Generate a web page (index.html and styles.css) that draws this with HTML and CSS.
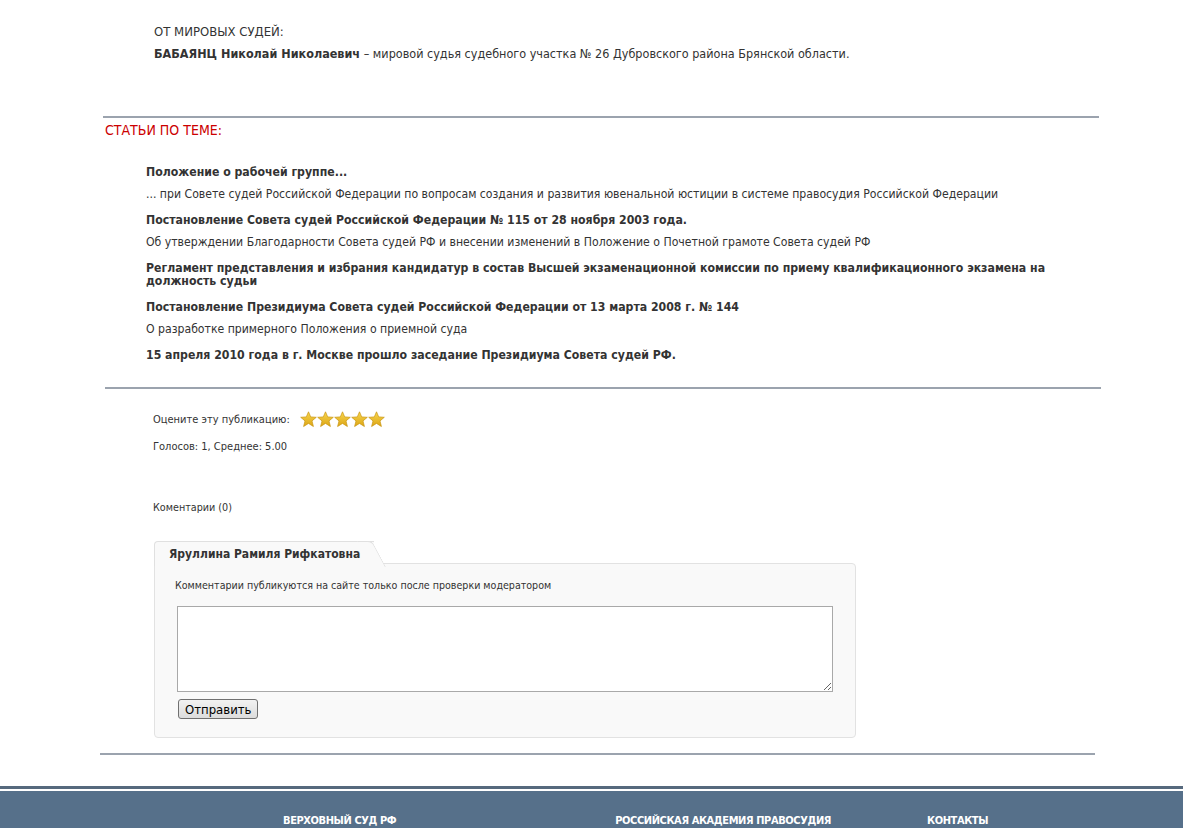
FILE: index.html
```html
<!DOCTYPE html>
<html lang="ru">
<head>
<meta charset="utf-8">
<title>Статья</title>
<link rel="stylesheet" href="styles.css">
</head>
<body>
<div class="page">
  <div class="content">
    <div class="judges">
      <p class="judges-head">ОТ МИРОВЫХ СУДЕЙ:</p>
      <p class="judges-line"><b>БАБАЯНЦ Николай Николаевич</b> – мировой судья судебного участка № 26 Дубровского района Брянской области.</p>
    </div>
    <hr class="rule rule-top">
    <h2 class="related-title">СТАТЬИ ПО ТЕМЕ:</h2>
    <ul class="related">
      <li>
        <a class="rel-title">Положение о рабочей группе...</a>
        <p class="rel-desc">... при Совете судей Российской Федерации по вопросам создания и развития ювенальной юстиции в системе правосудия Российской Федерации</p>
      </li>
      <li>
        <a class="rel-title">Постановление Совета судей Российской Федерации № 115 от 28 ноября 2003 года.</a>
        <p class="rel-desc">Об утверждении Благодарности Совета судей РФ и внесении изменений в Положение о Почетной грамоте Совета судей РФ</p>
      </li>
      <li>
        <a class="rel-title">Регламент представления и избрания кандидатур в состав Высшей экзаменационной комиссии по приему квалификационного экзамена на должность судьи</a>
      </li>
      <li>
        <a class="rel-title">Постановление Президиума Совета судей Российской Федерации от 13 марта 2008 г. № 144</a>
        <p class="rel-desc">О разработке примерного Положения о приемной суда</p>
      </li>
      <li>
        <a class="rel-title">15 апреля 2010 года в г. Москве прошло заседание Президиума Совета судей РФ.</a>
      </li>
    </ul>
    <hr class="rule rule-mid">
    <div class="rating">
      <div class="rate-row">
        <span>Оцените эту публикацию:</span>
        <span class="stars">
          <svg viewBox="0 0 17 17" class="star"><defs><linearGradient id="sg" x1="0" y1="0" x2="0" y2="1"><stop offset="0" stop-color="#f8d64e"/><stop offset="1" stop-color="#dca515"/></linearGradient></defs><path d="M8.5 0.8 L10.7 5.9 L16.3 6.3 L12 9.9 L13.4 15.5 L8.5 12.4 L3.6 15.5 L5 9.9 L0.7 6.3 L6.3 5.9 Z" fill="url(#sg)" stroke="#c99510" stroke-width="0.7" stroke-linejoin="round"/></svg>
          <svg viewBox="0 0 17 17" class="star"><path d="M8.5 0.8 L10.7 5.9 L16.3 6.3 L12 9.9 L13.4 15.5 L8.5 12.4 L3.6 15.5 L5 9.9 L0.7 6.3 L6.3 5.9 Z" fill="url(#sg)" stroke="#c99510" stroke-width="0.7" stroke-linejoin="round"/></svg>
          <svg viewBox="0 0 17 17" class="star"><path d="M8.5 0.8 L10.7 5.9 L16.3 6.3 L12 9.9 L13.4 15.5 L8.5 12.4 L3.6 15.5 L5 9.9 L0.7 6.3 L6.3 5.9 Z" fill="url(#sg)" stroke="#c99510" stroke-width="0.7" stroke-linejoin="round"/></svg>
          <svg viewBox="0 0 17 17" class="star"><path d="M8.5 0.8 L10.7 5.9 L16.3 6.3 L12 9.9 L13.4 15.5 L8.5 12.4 L3.6 15.5 L5 9.9 L0.7 6.3 L6.3 5.9 Z" fill="url(#sg)" stroke="#c99510" stroke-width="0.7" stroke-linejoin="round"/></svg>
          <svg viewBox="0 0 17 17" class="star"><path d="M8.5 0.8 L10.7 5.9 L16.3 6.3 L12 9.9 L13.4 15.5 L8.5 12.4 L3.6 15.5 L5 9.9 L0.7 6.3 L6.3 5.9 Z" fill="url(#sg)" stroke="#c99510" stroke-width="0.7" stroke-linejoin="round"/></svg>
        </span>
      </div>
      <p class="votes">Голосов: 1, Среднее: 5.00</p>
    </div>
    <p class="comments-count">Коментарии (0)</p>
    <div class="comment-form">
      <div class="tab">Яруллина Рамиля Рифкатовна</div>
      <div class="panel">
        <p class="note">Комментарии публикуются на сайте только после проверки модератором</p>
        <textarea class="area"></textarea>
        <button class="send" type="button">Отправить</button>
      </div>
    </div>
    <hr class="rule rule-bottom">
  </div>
  <footer class="footer">
    <div class="footer-inner">
      <a class="f1">ВЕРХОВНЫЙ СУД РФ</a>
      <a class="f2">РОССИЙСКАЯ АКАДЕМИЯ ПРАВОСУДИЯ</a>
      <a class="f3">КОНТАКТЫ</a>
    </div>
  </footer>
</div>
</body>
</html>
```
FILE: styles.css
```css
* { box-sizing: border-box; }
html, body { margin: 0; padding: 0; background: #fff; }
body {
  font-family: "DejaVu Sans Condensed", "DejaVu Sans", Tahoma, sans-serif;
  color: #333;
  font-size: 12px;
}
p { margin: 0; }
.page { width: 1183px; }
.content { padding: 24px 0 0 0; }

.judges { padding-left: 154px; }
.judges-head { font-size: 13px; line-height: 16px; color: #333; }
.judges-line { font-size: 12.5px; line-height: 16px; margin-top: 6px; color: #333; }
.judges-line b { color: #333; }

.rule { border: 0; height: 2px; background: #9ba3ae; margin: 0; }
.rule-top { margin: 54px 84px 0 103px; }
.related-title { font-size: 14px; font-weight: normal; color: #cc0000; margin: 4px 0 0 105px; line-height: 16px; }

.related { list-style: none; margin: 28px 0 0 146px; padding: 0; width: 905px; }
.related li { margin-bottom: 13px; }
.rel-title { display: block; font-weight: bold; font-size: 12.2px; line-height: 13px; color: #333; }
.rel-desc { font-size: 12.15px; line-height: 14px; margin-top: 8px; color: #333; }

.rule-mid { margin: 25px 82px 0 105px; }

.rating { padding-left: 153px; font-size: 11px; }
.rate-row { display: flex; align-items: center; margin-top: 21px; height: 18px; }
.stars { display: flex; margin-left: 10px; }
.star { width: 17px; height: 17px; display: block; }
.votes { margin-top: 12px; line-height: 13px; }

.comments-count { padding-left: 153px; font-size: 10.7px; margin-top: 48px; line-height: 13px; }

.comment-form { margin: 27px 0 0 154px; width: 702px; }
.tab {
  display: inline-block;
  position: relative;
  z-index: 1;
  height: 25px;
  padding: 5px 14px 0 14px;
  font-size: 12px;
  font-weight: bold;
  background: #f9f9f9;
  border: 1px solid #e0e0e0;
  border-right: 0;
  border-bottom: 0;
  border-radius: 4px 0 0 0;
  color: #333;
  margin-bottom: -3px;
}
.tab::after {
  content: "";
  position: absolute;
  top: -1px;
  right: -12px;
  width: 14px;
  height: 25px;
  background: #f9f9f9;
  border-top: 1px solid #e0e0e0;
  border-right: 1px solid #e0e0e0;
  border-radius: 0 5px 0 0;
  transform: skewX(28deg);
  transform-origin: bottom left;
}
.panel {
  background: #f9f9f9;
  border: 1px solid #e2e2e2;
  border-radius: 0 4px 4px 4px;
  padding: 15px 23px 18px 20px;
}
.note { font-size: 10.6px; line-height: 13px; }
.area {
  display: block;
  width: 656px;
  height: 86px;
  margin: 14px 0 0 2px;
  border: 1px solid #a9a9a9;
  background: #fff;
  resize: both;
}
.send {
  margin: 7px 0 0 3px;
  font-family: "Liberation Sans Narrow", "DejaVu Sans Condensed", sans-serif;
  font-size: 13px;
  padding: 1px 6px;
  height: 20px;
  border: 1px solid #707070;
  border-radius: 3px;
  background: linear-gradient(#f2f2f2, #dcdcdc);
  color: #000;
}
.rule-bottom { margin: 15px 88px 0 100px; }

.footer {
  margin-top: 31px;
  border-top: 3px solid #56697d;
  padding-top: 2px;
  background: #fff;
}
.footer-inner {
  background: #56708a;
  height: 60px;
  display: flex;
  align-items: flex-start;
  padding-top: 23px;
  font-family: "Liberation Sans Narrow", "DejaVu Sans Condensed", sans-serif;
  font-weight: bold;
  font-size: 11px;
  letter-spacing: -0.4px;
  color: #fff;
}
.footer-inner a { color: #fff; }
.f1 { margin-left: 283px; }
.f2 { margin-left: 219px; }
.f3 { margin-left: 96px; }
```
